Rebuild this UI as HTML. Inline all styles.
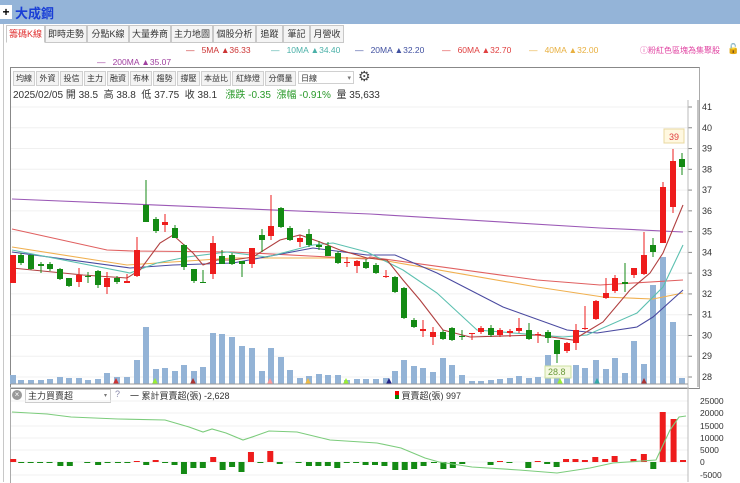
<!DOCTYPE html>
<html><head><meta charset="utf-8">
<style>
body{margin:0;width:740px;height:482px;overflow:hidden;background:#fff;font-family:"Liberation Sans","Noto Sans CJK TC",sans-serif;position:relative}
.a{position:absolute;white-space:nowrap}
.tab{position:absolute;top:25px;height:16px;border:1px solid #c8c8c8;background:#f4f4f4;font-size:9px;line-height:16px;text-align:center;color:#333;overflow:hidden}
.tb{position:absolute;top:71px;height:13px;border:1px solid #d0d0d0;background:#f3f3f3;font-size:8px;line-height:13px;text-align:center;color:#333;overflow:hidden}
.lg{position:absolute;font-size:8.5px;top:45px}
</style></head><body>
<div class="a" style="left:0;top:0;width:740px;height:24px;background:#94b4d8"></div>
<div class="a" style="left:0;top:5px;width:12px;height:14px;background:#fff;font-size:12px;line-height:14px;text-align:center;font-weight:bold">+</div>
<div class="a" style="left:15px;top:3px;font-size:13px;font-weight:bold;color:#1a3fd6">大成鋼</div>
<div class="a" style="left:3px;top:24px;width:1px;height:458px;background:#c8c8c8"></div>
<div class="tab" style="left:6px;width:37px;background:#fff;color:#e03030;border-bottom-color:#fff">籌碼K線</div>
<div class="tab" style="left:45px;width:40px">即時走勢</div>
<div class="tab" style="left:87px;width:40px">分點K線</div>
<div class="tab" style="left:129px;width:40px">大量券商</div>
<div class="tab" style="left:171px;width:40px">主力地圖</div>
<div class="tab" style="left:213px;width:41px">個股分析</div>
<div class="tab" style="left:256px;width:25px">追蹤</div>
<div class="tab" style="left:283px;width:25px">筆記</div>
<div class="tab" style="left:310px;width:32px">月營收</div>
<div class="lg" style="left:186px;color:#c33">—&nbsp;&nbsp;&nbsp;5MA ▲36.33</div>
<div class="lg" style="left:271px;color:#4ab0a8">—&nbsp;&nbsp;&nbsp;10MA ▲34.40</div>
<div class="lg" style="left:355px;color:#4050a0">—&nbsp;&nbsp;&nbsp;20MA ▲32.20</div>
<div class="lg" style="left:442px;color:#e04040">—&nbsp;&nbsp;&nbsp;60MA ▲32.70</div>
<div class="lg" style="left:529px;color:#e8b040">—&nbsp;&nbsp;&nbsp;40MA ▲32.00</div>
<div class="lg" style="left:97px;top:57px;color:#a040a0">—&nbsp;&nbsp;&nbsp;200MA ▲35.07</div>
<div class="lg" style="left:640px;color:#e040a0;font-size:8px">ⓘ粉紅色區塊為集聚股</div>
<div class="a" style="left:727px;top:44px;font-size:10px">🔓</div>
<div class="a" style="left:10px;top:67px;width:688px;height:320px;border:1px solid #888;border-right:1px solid #aaa"></div>
<div class="tb" style="left:13px;width:20px">均線</div>
<div class="tb" style="left:36px;width:21px">外資</div>
<div class="tb" style="left:60px;width:21px">投信</div>
<div class="tb" style="left:84px;width:20px">主力</div>
<div class="tb" style="left:107px;width:20px">融資</div>
<div class="tb" style="left:130px;width:20px">布林</div>
<div class="tb" style="left:153px;width:21px">趨勢</div>
<div class="tb" style="left:177px;width:21px">撐壓</div>
<div class="tb" style="left:201px;width:28px">本益比</div>
<div class="tb" style="left:232px;width:30px">紅綠燈</div>
<div class="tb" style="left:265px;width:29px">分價量</div>
<div class="tb" style="left:298px;width:56px;background:#fff;text-align:left;padding-left:2px;box-sizing:border-box">日線<span style="float:right;font-size:7px;color:#777;padding-right:2px">▾</span></div>
<div class="a" style="left:358px;top:68px;font-size:14px;color:#444">⚙</div>
<div class="a" style="left:13px;top:86px;font-size:10px;color:#333">2025/02/05 開 38.5&nbsp; 高 38.8&nbsp; 低 37.75&nbsp; 收 38.1&nbsp;&nbsp; <span style="color:#2a9a2a">漲跌 -0.35&nbsp; 漲幅 -0.91%</span>&nbsp; 量 35,633</div>
<div class="a" style="left:10px;top:387px;width:678px;height:95px;border-left:1px solid #aaa;border-top:1px solid #ccc"></div>
<div class="a" style="left:12px;top:390px;width:10px;height:10px;border-radius:50%;background:#999;color:#fff;font-size:8px;line-height:10px;text-align:center">×</div>
<div class="a" style="left:25px;top:389px;width:82px;height:12px;border:1px solid #ccc;font-size:9px;line-height:12px;padding-left:2px;color:#333">主力買賣超<span style="float:right;font-size:6px;color:#777;padding-right:3px">▾</span></div>
<div class="a" style="left:115px;top:389px;font-size:9px;color:#88a">?</div>
<div class="a" style="left:130px;top:389px;font-size:9px;color:#333">一 累計買賣超(張) -2,628</div>
<div class="a" style="left:395px;top:389px;font-size:9px;color:#333"><span style="display:inline-block;width:4px;height:8px;background:linear-gradient(#e00 50%,#080 50%)"></span> 買賣超(張) 997</div>
<svg class="a" style="left:0;top:0" width="740" height="482" id="s"></svg>
<script>
var s=document.getElementById('s'),h='';
function L(x1,y1,x2,y2,c,w){h+='<line x1="'+x1+'" y1="'+y1+'" x2="'+x2+'" y2="'+y2+'" stroke="'+c+'" stroke-width="'+(w||1)+'"/>';}
function R(x,y,w,hh,c){h+='<rect x="'+x+'" y="'+y+'" width="'+w+'" height="'+Math.max(hh,1)+'" fill="'+c+'"/>';}
function P(pts,c){h+='<polyline fill="none" stroke="'+c+'" stroke-width="1.1" points="'+pts+'"/>';}
function T(x,y,t,c,sz){h+='<text x="'+x+'" y="'+y+'" font-size="'+(sz||9)+'" fill="'+(c||'#333')+'" font-family="Liberation Sans">'+t+'</text>';}
for(var p=41;p>=28;p--){var y=107+(41-p)*20.77;L(11,y,688,y,'#f0f0f0');L(688,y,692,y,'#888');T(702,y+3,p);}
L(688,100,688,387,'#bbb');L(698,100,698,387,'#888');
[401,413,426,438,450,462,475].forEach(function(y,i){L(11,y,688,y,'#f0f0f0');T(700,y+3,[25000,20000,15000,10000,5000,0,-5000][i],'#333',8.5);});
L(688,387,688,482,'#bbb');
var vol=[375,380,380,380,379,377,378,378,380,379,373,377,377,360,327,369,368,371,365,371,367,333,334,337,346,348,371,348,357,370,378,376,374,375,375,380,379,379,379,378,371,360,366,368,372,358,365,375,381,381,380,379,378,376,378,377,355,378,372,365,368,360,369,358,373,341,364,285,257,322];
var C=[[13,'r',255,283,255,283],[21,'g',255,263,253,265],[31,'g',255,269,255,270],[41,'g',264,266,262,273],[50,'g',264,269,262,271],[60,'g',269,279,268,280],[69,'g',278,286,278,287],[79,'r',275,282,268,287],[88,'g',276,277,272,283],[98,'g',271,285,270,288],[107,'r',278,287,272,294],[117,'g',278,282,276,284],[127,'r',281,283,274,283],[137,'r',250,276,237,277],[146,'g',205,222,180,222],[156,'g',219,231,217,233],[165,'r',222,225,214,232],[175,'g',228,238,225,238],[184,'g',245,267,244,270],[194,'g',269,281,269,283],[203,'g',282,283,270,283],[213,'r',243,274,236,279],[222,'g',256,264,250,264],[232,'g',255,264,253,265],[242,'g',261,264,261,277],[252,'r',248,264,248,268],[262,'g',235,240,229,252],[271,'r',226,236,195,240],[281,'g',208,227,207,228],[290,'g',228,240,226,241],[300,'r',238,242,235,247],[309,'g',234,245,229,247],[319,'g',245,247,241,250],[328,'g',246,256,242,256],[338,'g',253,263,251,264],[347,'r',262,263,257,267],[357,'r',261,266,260,273],[366,'g',262,268,259,269],
[376,'g',265,273,263,274],[386,'r',276,277,270,278],[395,'g',277,292,276,293],[404,'g',288,318,287,319],[414,'g',320,327,318,328],[423,'r',329,331,320,337],[433,'r',332,337,327,345],[443,'g',332,339,330,340],[452,'g',328,340,327,341],[462,'g',336,337,330,340],[472,'r',333,334,333,340],[481,'r',328,332,326,334],[491,'g',328,335,325,337],[500,'r',330,335,328,337],[510,'r',331,333,329,337],[519,'r',328,331,318,333],[529,'g',330,339,323,340],[538,'r',334,335,332,343],[548,'g',332,338,330,343],[557,'g',340,354,340,363],[567,'r',343,351,342,353],[576,'r',330,343,324,350],[585,'r',328,329,306,330],[596,'r',301,319,300,320],[606,'r',293,298,278,299],[615,'r',278,291,275,293],[625,'g',282,284,263,292],[634,'r',268,275,268,278],[644,'r',255,274,232,275],[653,'g',245,252,238,257],[663,'r',187,243,182,243],[673,'r',161,207,149,213],[682,'g',159,167,153,175]];
C.forEach(function(c,i){var v=vol[i]||378;R(c[0]-3,v,6,384-v,'#93b3d6');});
['#c33@116','#9e3@155','#a33@193','#f99@270','#eb4@308','#9e3@346','#228@389','#9e3@560','#3aa@597','#a33@644'].forEach(function(m){var a=m.split('@');var x=+a[1];h+='<polygon points="'+(x-3)+',384 '+(x+3)+',384 '+x+',378" fill="'+a[0]+'"/>';});
L(11,384,688,384,'#999');
P('12,199 370,214 600,228 683,232','#9b59b6');
P('12,229 107,250 133,251 233,252 367,259 370,257 537,280 600,285 683,280','#e06060');
P('12,247 127,265 233,258 367,258 370,258 537,287 603,297 653,299 683,293','#f0b050');
P('12,252 130,268 173,265 233,263 313,248 367,255 395,255 437,273 503,307 567,330 597,333 637,327 653,317 683,290','#4a4aa0');
P('12,250 130,273 157,263 187,257 227,252 267,257 313,245 333,243 367,252 403,270 437,293 477,330 563,337 587,335 637,313 663,287 683,245','#5cc0b0');
P('12,268 83,275 127,278 140,270 160,243 173,235 193,253 203,265 217,260 233,260 253,257 280,240 300,235 320,242 340,250 367,258 387,260 403,280 420,300 443,330 470,337 537,335 573,340 603,322 630,290 650,273 663,253 683,205','#b04040');
C.forEach(function(c){var col=c[1]=='r'?'#ee1c1c':'#148a14';L(c[0],c[4],c[0],c[5],col);R(c[0]-3,c[2],6,c[3]-c[2],col);});
R(664,129,20,14,'#fff8e0');h+='<rect x="664" y="129" width="20" height="14" fill="none" stroke="#e8d8a0"/>';T(669,140,'39','#e04040',9);
R(545,366,26,12,'#f4f8e0');h+='<rect x="545" y="366" width="26" height="12" fill="none" stroke="#cce0a0"/>';T(548,375,'28.8','#6a9a3a',9);
var B=[[28,3],[45,-1],[65,-1],[85,-1],[105,-1],[128,-4],[148,-4],[185,-1],[208,-3],[228,-1],[250,-1],[270,-1],[290,1],[310,-3],[330,2],[350,-1],[370,-3],[390,-12],[410,-6],[430,-6],[452,5],[472,-8],[492,-5],[512,-10],[532,10],[552,-1],[573,11],[593,-2],[633,-1],[655,-4],[675,-4],[695,-4],[715,-6],[735,-1],[755,-1],[775,-3],[795,-3],[815,-4],[838,-8],[858,-8],[878,-7],[898,-4],[920,-1],[940,-7],[960,-6],[980,-2],[1040,-3],[1060,1],[1080,-1],[1120,-6],[1140,1],[1160,-2],[1180,-5],[1200,3],[1220,3],[1240,2],[1262,5],[1283,3],[1303,6],[1343,3],[1365,8],[1385,-7],[1405,50],[1428,43],[1448,2]];
B.forEach(function(b){var x=b[0]/2.12;if(b[1]>0)R(x-3,462-b[1],6,b[1],'#ee1c1c');else R(x-3,462,6,-b[1],'#148a14');});
P('12,412 47,414 71,417 118,419 165,420 189,427 203,432 212,429 226,433 243,440 255,436 269,431 297,432 330,440 377,443 401,448 425,458 439,462 472,467 519,470 557,473 590,468 613,463 656,460 670,430 679,417 686,416','#7ccc7c');
s.innerHTML=h;
</script>
</body></html>
